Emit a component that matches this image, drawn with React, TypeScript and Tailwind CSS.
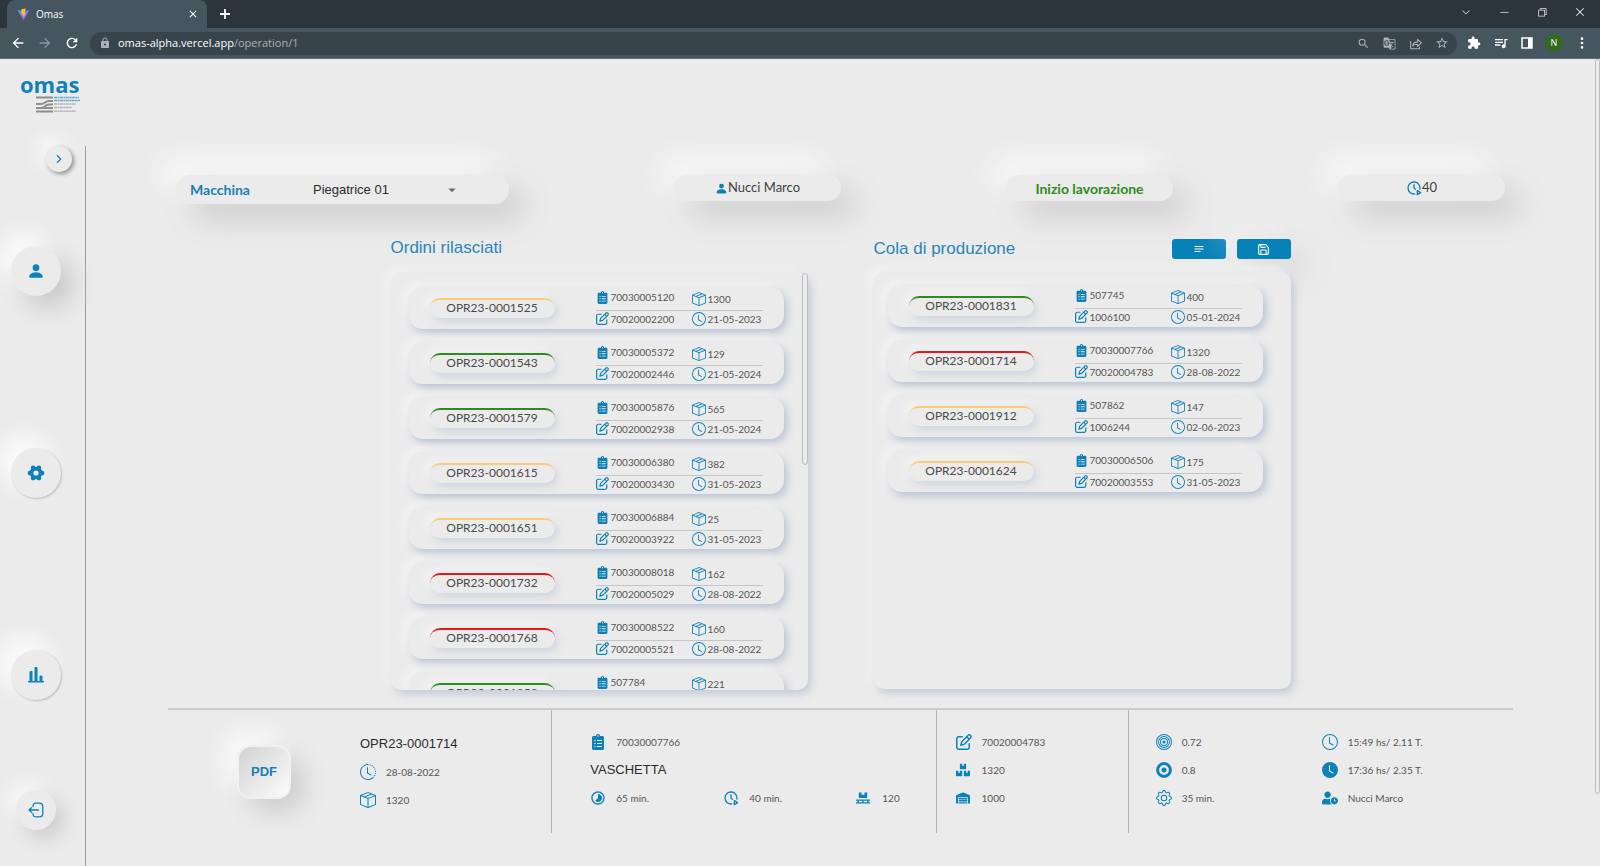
import type { ReactNode } from "react";
import {
  BsBoxSeam, BsBullseye, BsClock, BsClockFill, BsClockHistory, BsGear, BsPersonFill, BsThreeDotsVertical,
} from "react-icons/bs";
import { FaBoxes, FaClipboardList, FaPallet, FaUserClock, FaWarehouse } from "react-icons/fa";
import { FaRegPenToSquare } from "react-icons/fa6";
import {
  MdArrowBack, MdArrowDropDown, MdArrowForward, MdClose, MdExtension, MdGTranslate, MdLock, MdNotes,
  MdOutlineQueueMusic, MdRefresh, MdSearch, MdStarBorder, MdTimelapse,
} from "react-icons/md";
import { TbClockPlay } from "react-icons/tb";
import { LuChevronRight, LuSave } from "react-icons/lu";
import { VscChromeMinimize, VscChromeRestore, VscChevronDown, VscChromeClose } from "react-icons/vsc";

type Status = "green" | "red" | "amber";
type Order = { id: string; code: string; drawing: string; qty: string; date: string; status: Status };

const released: Order[] = [
  { id: "OPR23-0001525", code: "70030005120", drawing: "70020002200", qty: "1300", date: "21-05-2023", status: "amber" },
  { id: "OPR23-0001543", code: "70030005372", drawing: "70020002446", qty: "129", date: "21-05-2024", status: "green" },
  { id: "OPR23-0001579", code: "70030005876", drawing: "70020002938", qty: "565", date: "21-05-2024", status: "green" },
  { id: "OPR23-0001615", code: "70030006380", drawing: "70020003430", qty: "382", date: "31-05-2023", status: "amber" },
  { id: "OPR23-0001651", code: "70030006884", drawing: "70020003922", qty: "25", date: "31-05-2023", status: "amber" },
  { id: "OPR23-0001732", code: "70030008018", drawing: "70020005029", qty: "162", date: "28-08-2022", status: "red" },
  { id: "OPR23-0001768", code: "70030008522", drawing: "70020005521", qty: "160", date: "28-08-2022", status: "red" },
  { id: "OPR23-0001858", code: "507784", drawing: "1006139", qty: "221", date: "05-01-2024", status: "green" },
];

const queue: Order[] = [
  { id: "OPR23-0001831", code: "507745", drawing: "1006100", qty: "400", date: "05-01-2024", status: "green" },
  { id: "OPR23-0001714", code: "70030007766", drawing: "70020004783", qty: "1320", date: "28-08-2022", status: "red" },
  { id: "OPR23-0001912", code: "507862", drawing: "1006244", qty: "147", date: "02-06-2023", status: "amber" },
  { id: "OPR23-0001624", code: "70030006506", drawing: "70020003553", qty: "175", date: "31-05-2023", status: "amber" },
];

const statusBorder: Record<Status, string> = {
  green: "border-[#2f8a22]",
  red: "border-[#dc1c1c]",
  amber: "border-[#fbcb75]",
};

const raised = "shadow-[15px_15px_30px_#cccccc,-15px_-15px_30px_#fbfbfb]";
const soft = "shadow-[3px_4px_8px_#b9c2d4,-5px_-4px_8px_#f5f5f5]";
const pill = `flex h-[26px] w-[167px] items-center justify-center rounded-[14px] bg-[#ebebeb] ${raised}`;
const round = "flex items-center justify-center rounded-full bg-[#ebebeb] text-[#0d82b8]";

function TabStrip() {
  return (
    <div className="flex h-7 items-end bg-[#2b363c] text-white">
      <div className="ml-[7px] flex h-7 w-[200px] items-center rounded-t-lg bg-[#45565f] pr-2 pl-[10px]">
        <svg className="size-[13px]" viewBox="0 0 32 32" aria-hidden="true">
          <defs>
            <linearGradient id="tri" x1="0" y1="0" x2="1" y2="1">
              <stop offset="0" stopColor="#41a8ff" />
              <stop offset="1" stopColor="#bd34fe" />
            </linearGradient>
          </defs>
          <path d="M1 5 L16 31 L31 5 L17 8 Z" fill="url(#tri)" />
          <path d="M22 1 L11 3 L10.500 15 L14 14.500 L13 19 L16 18.500 L15 25 L22 12 L18.500 12.500 Z" fill="#ffc420" />
        </svg>
        <span className="ml-[6px] text-[10px]">Omas</span>
        <button className="ml-auto" aria-label="Close tab"><MdClose className="size-3" /></button>
      </div>
      <button className="ml-[10px] flex h-7 items-center" aria-label="New tab">
        <svg className="size-4" viewBox="0 0 16 16" stroke="#fff" strokeWidth="1.800"><path d="M8 3v10M3 8h10" /></svg>
      </button>
      <div className="ml-auto flex h-7 items-center gap-[26px] pr-[14px] pb-1 text-[#dfe3e5]">
        <button aria-label="Search tabs"><VscChevronDown className="size-3" /></button>
        <button aria-label="Minimize"><VscChromeMinimize className="size-3" /></button>
        <button aria-label="Restore"><VscChromeRestore className="size-3" /></button>
        <button aria-label="Close"><VscChromeClose className="size-3" /></button>
      </div>
    </div>
  );
}

function Toolbar() {
  return (
    <div className="flex h-[31px] items-center border-b border-[#5c6c74] bg-[#45565f] pr-[11px] text-white">
      <div className="flex gap-[11px] pl-[10px]">
        <button aria-label="Back"><MdArrowBack className="size-4" /></button>
        <button aria-label="Forward" className="text-[#8b979d]"><MdArrowForward className="size-4" /></button>
        <button aria-label="Reload"><MdRefresh className="size-4" /></button>
      </div>
      <div className="ml-[10px] flex h-[23px] flex-1 items-center rounded-full bg-[#38444b] pr-2 pl-[9px] text-[#a9b2b6]">
        <MdLock className="size-3" />
        <span className="ml-[7px] text-[11px]"><span className="text-white">omas-alpha.vercel.app</span>/operation/1</span>
        <div className="ml-auto flex gap-[13px]">
          <button aria-label="Zoom"><MdSearch className="size-[13px]" /></button>
          <button aria-label="Translate"><MdGTranslate className="size-[13px]" /></button>
          <button aria-label="Share">
            <svg className="size-[13px]" viewBox="0 0 16 16" fill="none" stroke="currentColor" strokeWidth="1.300" strokeLinejoin="round">
              <path d="M2 5v9.500h11V12M4.500 11c.5-3 2.500-5 6-5V3l4.700 4.300-4.700 4.200V9c-2.500 0-4.500.5-6 2z" />
            </svg>
          </button>
          <button aria-label="Bookmark"><MdStarBorder className="size-[14px]" /></button>
        </div>
      </div>
      <div className="ml-[10px] flex items-center gap-3">
        <button aria-label="Extensions"><MdExtension className="size-[14px]" /></button>
        <button aria-label="Media"><MdOutlineQueueMusic className="size-4" /></button>
        <button aria-label="Side panel">
          <svg className="size-3" viewBox="0 0 12 12"><path d="M1 1h10v10H1z" fill="none" stroke="#fff" strokeWidth="1.500" /><path d="M7 1h4v10H7z" fill="#fff" /></svg>
        </button>
        <button className="flex size-[18px] items-center justify-center rounded-full bg-[#33691e] text-[9px]">N</button>
        <button aria-label="Menu"><BsThreeDotsVertical className="size-[14px]" /></button>
      </div>
    </div>
  );
}

function Logo() {
  return (
    <div className="flex w-[60px] flex-col items-end">
      <span className="w-full font-['Open_Sans'] text-[22px] leading-[17px] font-bold text-[#0d82b8]">omas</span>
      <svg className="mt-[3px] h-[17px] w-11" viewBox="0 0 44 17" aria-hidden="true">
        <g fill="none" stroke="#8f8f8f" strokeWidth="2">
          <path d="M0 1.500h17M0 8h5c4 0 4-3 8-3h4M0 12h5c4 0 4-3.500 8-3.500h4M0 12h17M0 15.500h17" />
        </g>
        <g strokeWidth="1.500" strokeDasharray="3 .5 2 .4">
          <path d="M18 1.500h25M18 4.500h26" stroke="#5fa9cc" />
          <path d="M18 8h22M18 11.500h18M18 15.200h22" stroke="#b5b5b5" />
        </g>
      </svg>
    </div>
  );
}

function Sidebar() {
  return (
    <aside className="flex w-[86px] shrink-0 flex-col border-r border-[#9d9d9d]">
      <button aria-label="Expand menu" className={`${round} ml-[46px] size-[26px] shadow-[2px_2px_4px_#8f8f8f,-8px_-8px_20px_#fafafa]`}>
        <LuChevronRight className="size-[14px]" />
      </button>
      <nav className="mt-[74px] flex flex-col items-start gap-[152px] pl-[11px]">
        <a href="#operator" aria-label="Operator" className={`${round} size-[50px] shadow-[12px_12px_24px_#c8c8c8,-12px_-12px_24px_#fdfdfd]`}>
          <BsPersonFill className="size-[18px]" />
        </a>
        <a href="#settings" aria-label="Settings" className={`${round} size-[50px] shadow-[1px_1px_2px_#bdbdbd,-12px_-12px_24px_#fdfdfd]`}>
          <svg className="size-[18px]" viewBox="0 0 18 18">
            <g fill="currentColor">
              <circle cx="3.200" cy="9" r="2.500" /><circle cx="14.800" cy="9" r="2.500" />
              <circle cx="6.100" cy="3.900" r="2.400" /><circle cx="11.900" cy="3.900" r="2.400" />
              <circle cx="6.100" cy="14.100" r="2.400" /><circle cx="11.900" cy="14.100" r="2.400" />
            </g>
            <circle cx="9" cy="9" r="4.400" fill="none" stroke="currentColor" strokeWidth="3.600" />
          </svg>
        </a>
        <a href="#stats" aria-label="Statistics" className={`${round} size-[50px] shadow-[1px_1px_2px_#bdbdbd,-12px_-12px_24px_#fdfdfd]`}>
          <svg className="size-4" viewBox="0 0 16 16" fill="currentColor">
            <path d="M1.500 5a1 1 0 0 1 1-1h1a1 1 0 0 1 1 1v9h2V1a1 1 0 0 1 1-1h1a1 1 0 0 1 1 1v13h2V9.500a1 1 0 0 1 1-1h1a1 1 0 0 1 1 1V14H16v1.500H0V14h1.500z" />
          </svg>
        </a>
      </nav>
      <a href="#logout" aria-label="Log out" className={`${round} mt-[90px] ml-4 size-10 shadow-[8px_8px_18px_#cccccc,-8px_-8px_18px_#f8f8f8]`}>
        <svg className="size-4" viewBox="0 0 16 16" fill="none" stroke="currentColor" strokeWidth="1.300" strokeLinecap="round" strokeLinejoin="round">
          <path d="M5 4.500C5 2 6 1.200 8 1.200h3.200c2.400 0 3.600 1 3.600 3.600v6.400c0 2.600-1.200 3.600-3.600 3.600H8c-2 0-3-.8-3-3.300M10.500 8H1M3.500 5.800 1 8l2.500 2.200" />
        </svg>
      </a>
    </aside>
  );
}

function OrderCard({ order }: { order: Order }) {
  return (
    <li className={`flex h-[42px] shrink-0 items-start justify-between rounded-[14px] bg-[#ebebeb] px-[21px] ${soft}`}>
      <span className={`mt-[11px] flex h-5 w-[125px] items-center justify-center rounded-[10px] border-t-2 pb-[3px] text-[12px] leading-[15px] text-[#4a4a4a] ${statusBorder[order.status]} shadow-[3px_4px_8px_#cfd4de,-5px_-4px_8px_#f3f3f3]`}>
        {order.id}
      </span>
      <div className="w-[167px] pt-px text-[10px] leading-[18px] text-[#555]">
        <div className="flex h-[23px] items-start border-b border-[#c6c6c6]">
          <span className="flex w-24 items-center gap-[2px]"><FaClipboardList className="size-[13px] text-[#0d7fb3]" />{order.code}</span>
          <span className="flex items-center gap-[2px] pt-[2px]"><BsBoxSeam className="size-[14px] text-[#0d82b8]" />{order.qty}</span>
        </div>
        <div className="flex h-[15px] items-center">
          <span className="flex w-24 items-center gap-[2px]"><FaRegPenToSquare className="size-[13px] text-[#0d82b8]" />{order.drawing}</span>
          <span className="flex items-center gap-[2px]"><BsClock className="size-[14px] text-[#0d82b8]" />{order.date}</span>
        </div>
      </div>
    </li>
  );
}

function OrderList({ orders, inset }: { orders: Order[]; inset: string }) {
  return (
    <div className="relative h-[417px] rounded-[10px] bg-[#ebebeb] shadow-[3px_4px_8px_#c3c9d6,-5px_-4px_8px_#f4f4f4]">
      <ul className={`flex h-full flex-col gap-[13px] overflow-hidden rounded-[10px] ${inset}`}>
        {orders.map((o) => <OrderCard key={o.id} order={o} />)}
      </ul>
      {orders.length > 7 && (
        <div className="absolute top-0 right-0 h-48 w-[6px] rounded-full border border-[#bdbdbd] bg-[#ebebeb]" />
      )}
    </div>
  );
}

function Stat({ icon, children }: { icon: ReactNode; children: ReactNode }) {
  return (
    <div className="flex h-7 items-center gap-[10px] text-[10px] text-[#555]">
      <span className="flex w-4 text-[16px] text-[#0d82b8]">{icon}</span>
      {children}
    </div>
  );
}

function Details() {
  return (
    <section className="mt-[18px] grid grid-cols-[2fr_2fr_1fr_2fr] border-t-2 border-[#cbcbcb]">
      <div className="flex h-[123px] border-r border-[#b4b4b4] pt-5">
        <button className="mt-[15px] ml-[69px] size-[54px] rounded-[14px] border-2 border-[#f1f1f1] bg-linear-to-br from-[#d2d2d2] to-[#fcfcfc] font-['Liberation_Sans'] text-[13px] font-bold text-[#1a7fb4] shadow-[12px_12px_24px_#cdcdcd,-12px_-12px_24px_#fbfbfb]">
          PDF
        </button>
        <div className="ml-[69px]">
          <h2 className="h-7 font-['Liberation_Sans'] text-[13px] leading-7 text-[#2b2b2b]">OPR23-0001714</h2>
          <Stat icon={<BsClockHistory />}>28-08-2022</Stat>
          <Stat icon={<BsBoxSeam />}>1320</Stat>
        </div>
      </div>
      <div className="border-r border-[#b4b4b4] pt-[18px] pl-[38px]">
        <Stat icon={<FaClipboardList />}>70030007766</Stat>
        <h3 className="h-7 font-['Liberation_Sans'] text-[13px] leading-7 text-[#2b2b2b]">VASCHETTA</h3>
        <div className="grid grid-cols-[133px_133px_1fr]">
          <Stat icon={<MdTimelapse />}>65 min.</Stat>
          <Stat icon={<TbClockPlay />}>40 min.</Stat>
          <Stat icon={<FaPallet className="size-[14px]" />}>120</Stat>
        </div>
      </div>
      <div className="border-r border-[#b4b4b4] pt-[18px] pl-[19px]">
        <Stat icon={<FaRegPenToSquare />}>70020004783</Stat>
        <Stat icon={<FaBoxes className="size-[14px]" />}>1320</Stat>
        <Stat icon={<FaWarehouse className="size-[14px]" />}>1000</Stat>
      </div>
      <div className="grid grid-cols-[166px_1fr] pt-[18px] pl-[27px]">
        <div>
          <Stat icon={<BsBullseye />}>0.72</Stat>
          <Stat icon={
            <svg className="size-4" viewBox="0 0 16 16"><circle cx="8" cy="8" r="6.400" fill="none" stroke="currentColor" strokeWidth="3" /><circle cx="8" cy="8" r="2.500" fill="currentColor" /></svg>
          }>0.8</Stat>
          <Stat icon={<BsGear />}>35 min.</Stat>
        </div>
        <div>
          <Stat icon={<BsClock />}>15:49 hs/ 2.11 T.</Stat>
          <Stat icon={<BsClockFill />}>17:36 hs/ 2.35 T.</Stat>
          <Stat icon={<FaUserClock />}>Nucci Marco</Stat>
        </div>
      </div>
    </section>
  );
}

export default function App() {
  return (
    <div className="flex min-h-screen flex-col bg-[#ebebeb] font-['Lato','Liberation_Sans',sans-serif]">
      <header className="font-['Open_Sans',sans-serif]">
        <TabStrip />
        <Toolbar />
      </header>
      <div className="relative flex flex-1 flex-col">
        <div className="h-[87px] pt-[17px] pl-5"><Logo /></div>
        <div className="flex flex-1">
          <Sidebar />
          <main className="flex-1 pt-[29px] pr-[87px] pl-[82px]">
            <div className="flex h-[29px] items-start justify-between px-2 text-[13px] text-[#3f3f3f]">
              <div className={`flex h-[29px] w-[333px] items-center rounded-[14px] bg-[#ebebeb] pl-[14px] ${raised}`}>
                <label htmlFor="machine" className="w-[123px] text-[14px] font-bold text-[#1a7fb4]">Macchina</label>
                <div className="relative flex items-center">
                  <select id="machine" className="w-[148px] appearance-none bg-transparent font-['Liberation_Sans'] text-[13px] text-[#2b2b2b]">
                    <option>Piegatrice 01</option>
                  </select>
                  <MdArrowDropDown className="pointer-events-none absolute right-0 size-[18px] text-[#6b6b6b]" />
                </div>
              </div>
              <div className={pill}><BsPersonFill className="size-[13px] text-[#0d7fb3]" />Nucci Marco</div>
              <button className={`${pill} text-[14px] font-bold text-[#2f8a22]`}>Inizio lavorazione</button>
              <div className={pill}><TbClockPlay className="size-4 text-[#0d82b8]" />40</div>
            </div>
            <div className="mt-[31px] flex justify-center gap-[66px]">
              <section className="w-[417px]">
                <h1 className="mb-3 h-[26px] font-['Liberation_Sans'] text-[17px] leading-[26px] text-[#2a86b8]">Ordini rilasciati</h1>
                <OrderList orders={released} inset="pt-[14px] pr-6 pl-[18px]" />
              </section>
              <section className="w-[417px]">
                <div className="mb-[9px] flex h-7 items-center">
                  <h1 className="flex-1 font-['Liberation_Sans'] text-[17px] text-[#2a86b8]">Cola di produzione</h1>
                  <button aria-label="Sort queue" className="flex h-5 w-[54px] items-center justify-center rounded-[3px] bg-[#0782b9] text-white">
                    <MdNotes className="size-3" />
                  </button>
                  <button aria-label="Save queue" className="ml-[11px] flex h-5 w-[54px] items-center justify-center rounded-[3px] bg-[#0782b9] text-white shadow-[15px_15px_30px_#d4d4d4,-15px_-15px_30px_#fbfbfb66]">
                    <LuSave className="size-[13px]" />
                  </button>
                </div>
                <OrderList orders={queue} inset="pt-[13px] pr-7 pl-[14px]" />
              </section>
            </div>
            <Details />
          </main>
        </div>
        <div className="absolute top-0 right-0 h-[735px] w-[5px] rounded-full border border-[#bdbdbd]" />
      </div>
    </div>
  );
}
